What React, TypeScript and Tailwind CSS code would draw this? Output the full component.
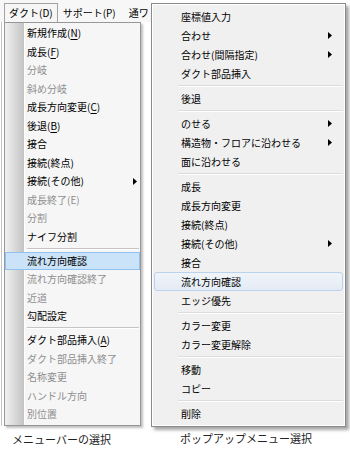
import React from 'react';

type Item =
  | { sep: true }
  | { sep?: false; label: string; accel?: string; disabled?: boolean; sub?: boolean; active?: boolean };

const menuBarItems: Item[] = [
  { label: '新規作成', accel: 'N' },
  { label: '成長', accel: 'F' },
  { label: '分岐', disabled: true },
  { label: '斜め分岐', disabled: true },
  { label: '成長方向変更', accel: 'C' },
  { label: '後退', accel: 'B' },
  { label: '接合' },
  { label: '接続(終点)' },
  { label: '接続(その他)', sub: true },
  { label: '成長終了(E)', disabled: true },
  { label: '分割', disabled: true },
  { label: 'ナイフ分割' },
  { sep: true },
  { label: '流れ方向確認', active: true },
  { label: '流れ方向確認終了', disabled: true },
  { label: '近道', disabled: true },
  { label: '勾配設定' },
  { sep: true },
  { label: 'ダクト部品挿入', accel: 'A' },
  { label: 'ダクト部品挿入終了', disabled: true },
  { label: '名称変更', disabled: true },
  { label: 'ハンドル方向', disabled: true },
  { label: '別位置', disabled: true },
];

const popupItems: Item[] = [
  { label: '座標値入力' },
  { label: '合わせ', sub: true },
  { label: '合わせ(間隔指定)', sub: true },
  { label: 'ダクト部品挿入' },
  { sep: true },
  { label: '後退' },
  { sep: true },
  { label: 'のせる', sub: true },
  { label: '構造物・フロアに沿わせる', sub: true },
  { label: '面に沿わせる' },
  { sep: true },
  { label: '成長' },
  { label: '成長方向変更' },
  { label: '接続(終点)' },
  { label: '接続(その他)', sub: true },
  { label: '接合' },
  { label: '流れ方向確認', active: true },
  { label: 'エッジ優先' },
  { sep: true },
  { label: 'カラー変更' },
  { label: 'カラー変更解除' },
  { sep: true },
  { label: '移動' },
  { label: 'コピー' },
  { sep: true },
  { label: '削除' },
];

const Arrow = () => (
  <svg width="4" height="7" viewBox="0 0 4 7" className="shrink-0">
    <path d="M0 0 L4 3.5 L0 7 Z" fill="#000" />
  </svg>
);

function Label({ label, accel }: { label: string; accel?: string }) {
  if (!accel) return <>{label}</>;
  return (
    <>
      {label}(<span className="underline underline-offset-2">{accel}</span>)
    </>
  );
}

function MenuBarDropdown() {
  return (
    <div className="relative w-[137px] border border-[#979797] bg-[linear-gradient(to_right,#f1f1f1_0px,#c3c3c3_19px,#ffffff_19px,#ffffff_20px,#f6f6f6_20px)] py-[1px] shadow-[2px_2px_2px_rgba(0,0,0,0.25)]">
      {menuBarItems.map((it, i) =>
        it.sep ? (
          <div key={i} className="flex h-[5.5px] items-center pl-[22px] pr-[1px]">
            <div className="h-[2px] w-full border-t border-[#c5c5c5] border-b border-b-white" />
          </div>
        ) : (
          <div
            key={i}
            className={`flex h-[18.5px] items-center justify-between pl-[22px] pr-[3px] ${
              it.active ? 'border border-[#8fc2f0] bg-[#cbe3f8]' : ''
            } ${it.disabled ? 'text-[#8e8e8e]' : 'text-black'}`}
          >
            <span className={it.active ? '-ml-px' : ''}>
              <Label label={it.label} accel={it.accel} />
            </span>
            {it.sub && <Arrow />}
          </div>
        )
      )}
    </div>
  );
}

function PopupMenu() {
  return (
    <div className="w-[195px] border border-[#8a8a8a] bg-[#f0f0f0] px-[2px] py-[3px] shadow-[3px_3px_3px_rgba(0,0,0,0.35)] ring-1 ring-inset ring-white">
      {popupItems.map((it, i) =>
        it.sep ? (
          <div key={i} className="flex h-[6px] items-center pl-[24px]">
            <div className="h-[2px] w-full border-t border-[#dcdcdc] border-b border-b-white" />
          </div>
        ) : (
          <div
            key={i}
            className={`flex h-[19px] items-center justify-between rounded-[3px] pl-[26px] pr-[10px] text-black ${
              it.active ? 'border border-[#b9d3ee] bg-[linear-gradient(to_bottom,#f0f4f9,#e4ebf4)]' : 'border border-transparent'
            }`}
          >
            <span>{it.label}</span>
            {it.sub && <Arrow />}
          </div>
        )
      )}
    </div>
  );
}

export default function App() {
  return (
    <div className="flex h-[452px] w-[350px] bg-white font-['Meiryo_UI','Noto_Sans_CJK_JP',sans-serif] text-[10px] leading-none">
      {/* Menu bar side */}
      <div className="flex w-[151px] flex-col">
        <div className="flex h-[22px] items-end bg-[#f7f7f7] pl-[4px]">
          <div className="flex h-[19px] items-center border border-b-0 border-[#a3a3a3] bg-[#f6f6f6] px-[4px] text-black">
            ダクト(D)
          </div>
          <div className="flex h-[19px] items-center px-[5px] text-black">サポート(P)</div>
          <div className="flex h-[19px] items-center overflow-hidden pl-[8px] text-black">通ワ</div>
        </div>
        <div className="flex">
          <div className="ml-px w-px bg-[#c6c6c6]" />
          <div className="ml-[2px]">
            <MenuBarDropdown />
          </div>
        </div>
        <div className="mt-[8px] pl-[12px] text-[11px] text-[#222]">メニューバーの選択</div>
      </div>

      {/* Popup side */}
      <div className="flex flex-col pt-[3px]">
        <PopupMenu />
        <div className="mt-[6px] pl-[29px] text-[11px] text-[#222]">ポップアップメニュー選択</div>
      </div>
    </div>
  );
}
